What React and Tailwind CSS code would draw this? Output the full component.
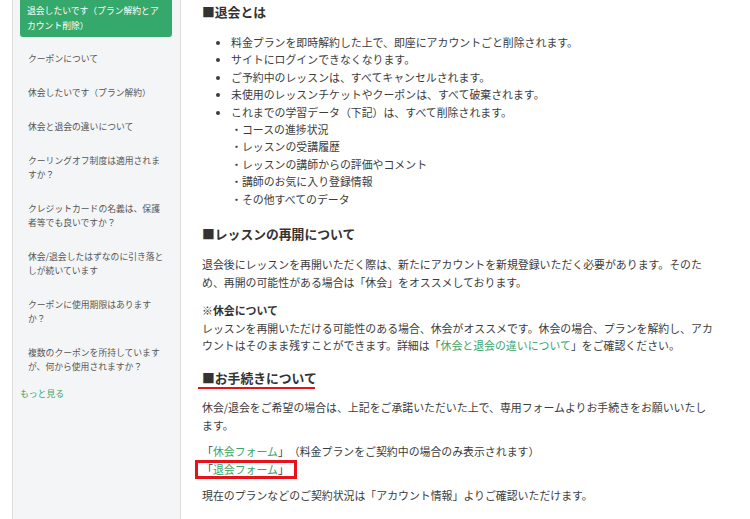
const font = {
  fontFamily: '"Noto Sans CJK JP", "Noto Sans", sans-serif',
};

function Sidebar() {
  return (
    <aside className="w-[169px] shrink-0 h-full border-l border-r border-[#dcdcdc] bg-[#f4f5f7] pl-[7px] pr-[8px]">
      <div className="bg-[#35a86b] rounded-b-[3px] px-[7px] pt-[3px] pb-[4px] text-[8.8px] leading-[15px] text-white">
        退会したいです（プラン解約とア
        <br />
        カウント削除）
      </div>

      <div className="mt-[5px] text-[8.8px] leading-[14px] text-[#555]">
        <div className="px-[8px] py-[10px]">クーポンについて</div>
        <div className="px-[8px] py-[10px]">休会したいです（プラン解約）</div>
        <div className="px-[8px] py-[10px]">休会と退会の違いについて</div>
        <div className="px-[8px] py-[10px]">
          クーリングオフ制度は適用されま
          <br />
          すか？
        </div>
        <div className="px-[8px] py-[10px]">
          クレジットカードの名義は、保護
          <br />
          者等でも良いですか？
        </div>
        <div className="px-[8px] py-[10px]">
          休会/退会したはずなのに引き落と
          <br />
          しが続いています
        </div>
        <div className="px-[8px] py-[10px]">
          クーポンに使用期限はあります
          <br />
          か？
        </div>
        <div className="px-[8px] py-[10px]">
          複数のクーポンを所持しています
          <br />
          が、何から使用されますか？
        </div>
      </div>

      <div className="mt-[3px] text-[8.8px] leading-[14px] text-[#3aa66c]">もっと見る</div>
    </aside>
  );
}

function App() {
  return (
    <div className="w-[750px] h-[519px] overflow-hidden bg-white flex pl-[12px] [text-spacing-trim:space-all]" style={font}>
      <Sidebar />

      <main className="pl-[21px] w-[560px] text-[10.9px] text-[#3c3c3c] whitespace-nowrap">
        <h2 className="mt-[2px] text-[12.8px] leading-[20px] font-bold text-[#333]">■退会とは</h2>

        <ul className="mt-[12px] list-disc pl-[29px] leading-[17.4px]">
          <li>料金プランを即時解約した上で、即座にアカウントごと削除されます。</li>
          <li>サイトにログインできなくなります。</li>
          <li>ご予約中のレッスンは、すべてキャンセルされます。</li>
          <li>未使用のレッスンチケットやクーポンは、すべて破棄されます。</li>
          <li>
            これまでの学習データ（下記）は、すべて削除されます。
            <div>・コースの進捗状況</div>
            <div>・レッスンの受講履歴</div>
            <div>・レッスンの講師からの評価やコメント</div>
            <div>・講師のお気に入り登録情報</div>
            <div>・その他すべてのデータ</div>
          </li>
        </ul>

        <h2 className="mt-[16px] text-[12.8px] leading-[20px] font-bold text-[#333]">■レッスンの再開について</h2>

        <p className="mt-[12px] leading-[17.6px]">
          退会後にレッスンを再開いただく際は、新たにアカウントを新規登録いただく必要があります。そのた
          <br />
          め、再開の可能性がある場合は「休会」をオススメしております。
        </p>

        <div className="mt-[11px] leading-[17.6px]">
          <div className="font-bold text-[#333]">※休会について</div>
          レッスンを再開いただける可能性のある場合、休会がオススメです。休会の場合、プランを解約し、アカ
          <br />
          ウントはそのまま残すことができます。詳細は「<span className="text-[#3aa66c]">休会と退会の違いについて</span>」をご確認ください。
        </div>

        <h2 className="mt-[13px] text-[12.8px] leading-[19px] font-bold text-[#333]">
          <span className="relative inline-block">
            ■お手続きについて
            <span className="absolute left-[-4px] bottom-[-2px] w-[117px] h-[2px] bg-[#e8121a]" />
          </span>
        </h2>

        <p className="mt-[12px] leading-[17.6px]">
          休会/退会をご希望の場合は、上記をご承諾いただいた上で、専用フォームよりお手続きをお願いいたし
          <br />
          ます。
        </p>

        <div className="mt-[9px] leading-[17.6px]">
          <div>
            「<span className="text-[#3aa66c]">休会フォーム</span>」（料金プランをご契約中の場合のみ表示されます）
          </div>
          <div>
            <span className="relative inline-block">
              「<span className="text-[#3aa66c] underline underline-offset-2">退会フォーム</span>」
              <span className="absolute left-[-7px] right-[-8px] top-[-1px] bottom-[-1px] border-[3px] border-[#e8121a]" />
            </span>
          </div>
        </div>

        <p className="mt-[9px] leading-[17.6px]">現在のプランなどのご契約状況は「アカウント情報」よりご確認いただけます。</p>
      </main>
    </div>
  );
}

export default App;
